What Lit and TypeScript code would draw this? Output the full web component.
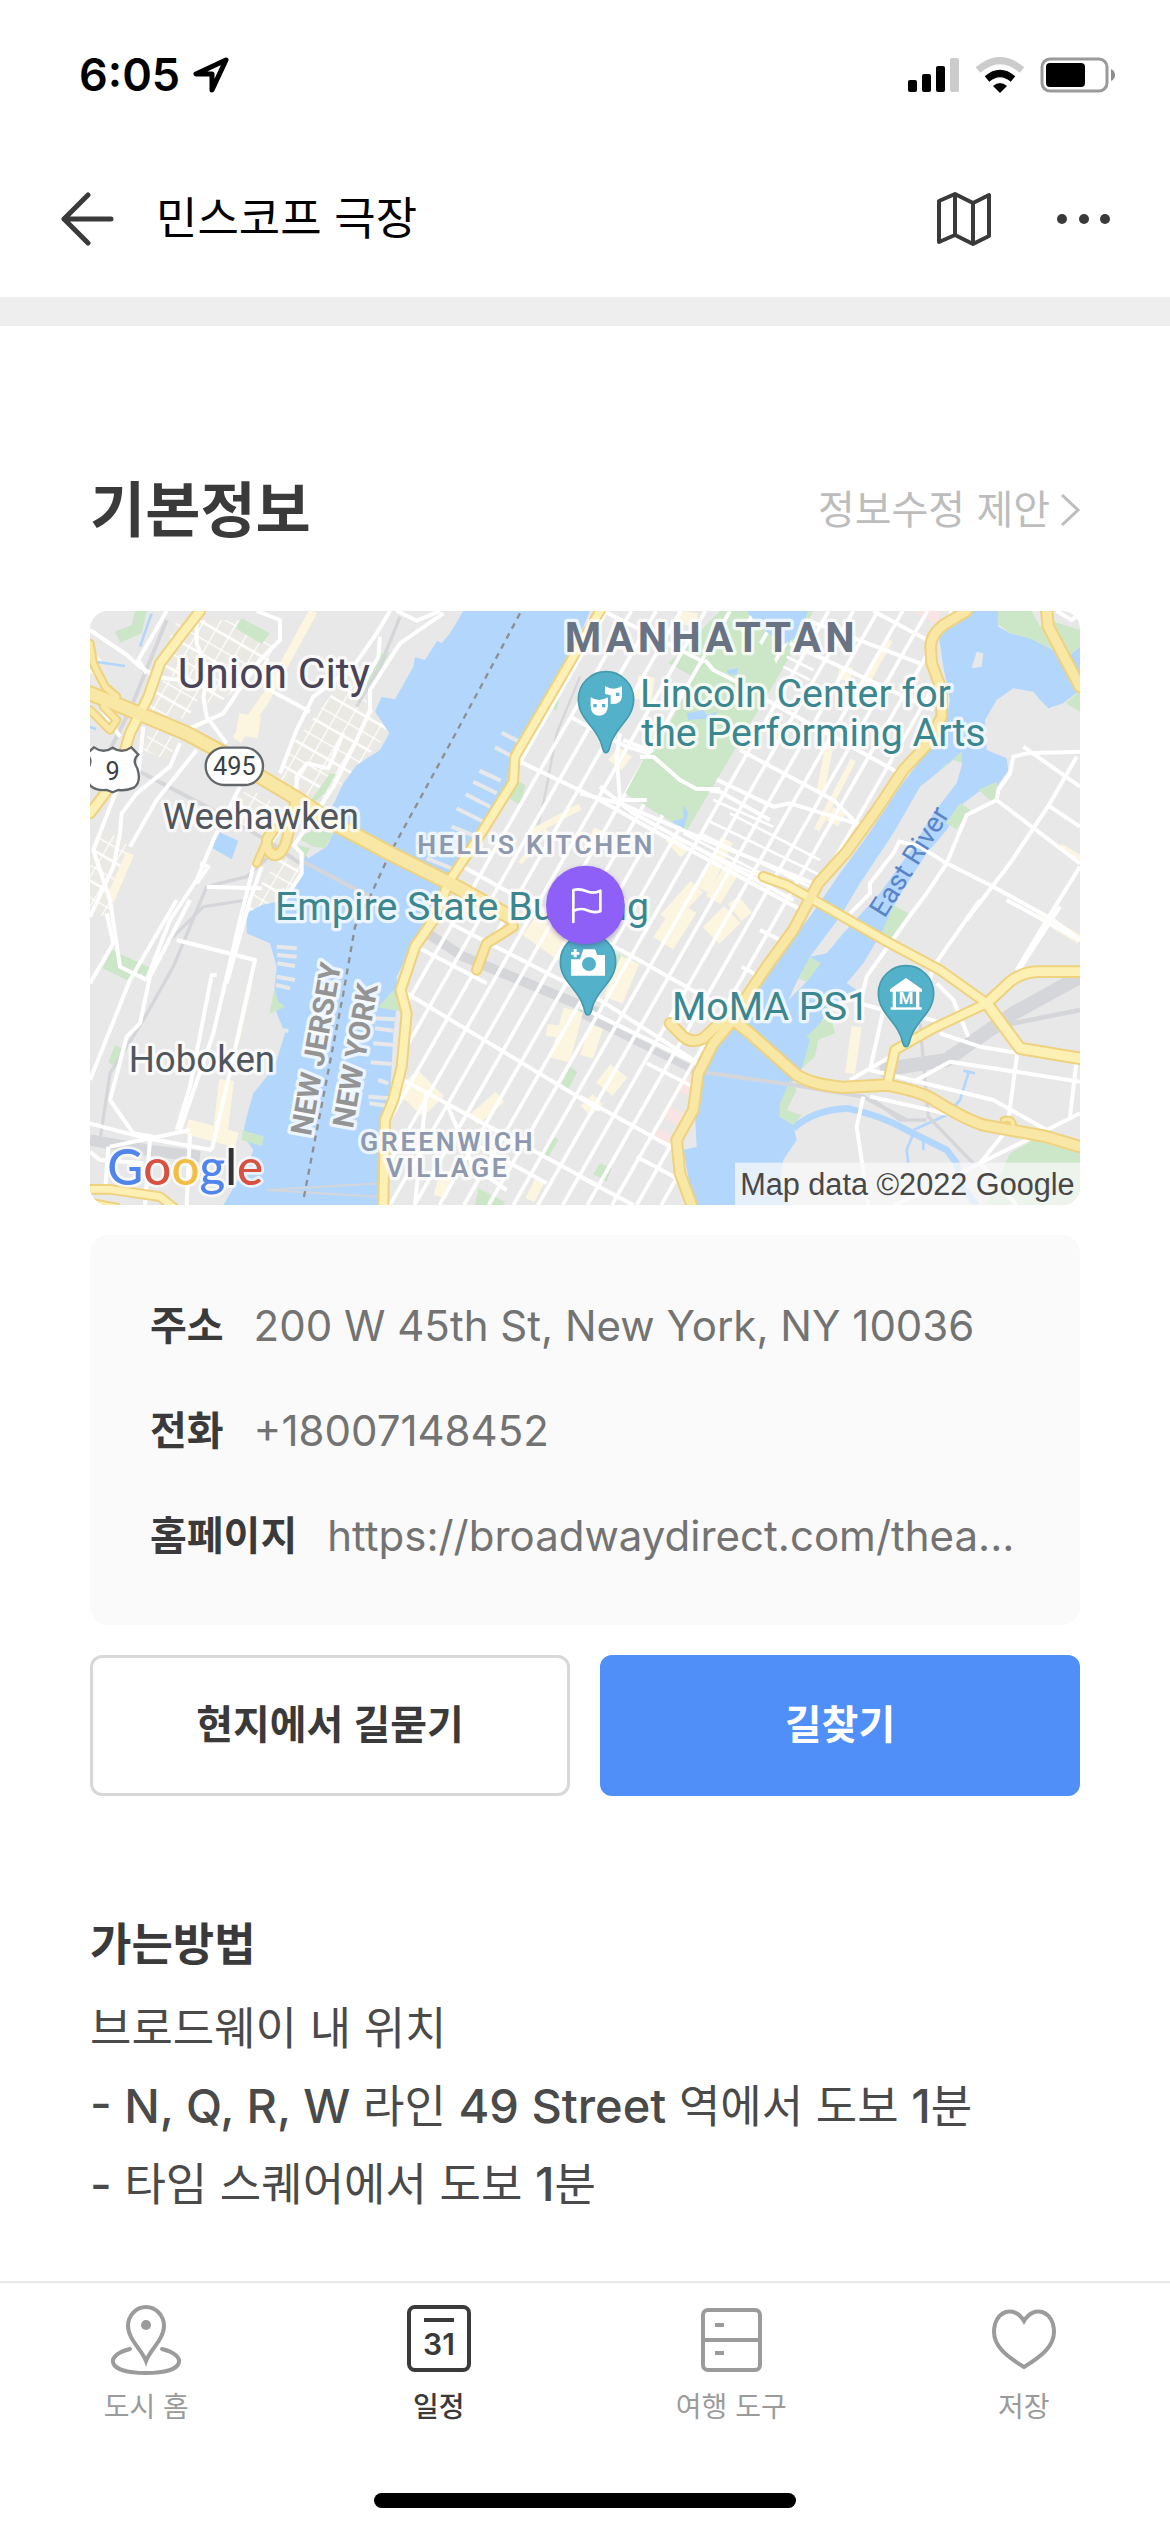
import { LitElement, html, css, svg } from "lit";
import { customElement } from "lit/decorators.js";
import { classMap } from "lit/directives/class-map.js";

/* Geometry of the map drawing; one map unit is a third of a pixel. */
const HUDSON =
  "M1150 33L1110 100 1085 130 1072 122 1035 180 1005 172 1000 200 945 298 905 290 885 335 928 400 900 450 830 495 790 550 762 610 740 640 760 700 740 740 685 775 660 745 665 815 630 870 590 905 545 915 500 940 500 1000 570 1030 590 1100 583 1170 590 1240 615 1300 590 1380 560 1430 520 1480 500 1550 488 1605 520 1650 505 1690 480 1730 430 1815H900L905 1600 930 1500 940 1300 955 1180 950 1130 990 1050 1050 970 1090 880 1190 700 1275 570 1295 480 1400 310 1480 170 1510 80 1530 33Z";
const EAST_RIVER =
  "M2640 33L2755 33 2755 80 2790 100 2850 115 2920 150 2970 165 3000 140 3000 270 2950 310 2905 325 2880 300 2860 275 2800 265 2750 300 2715 360 2720 450 2780 475 2785 510 2750 560 2700 572 2650 610 2600 690 2540 760 2450 900 2410 990 2350 1090 2300 1150 2330 1170 2240 1240 2190 1320 2200 1360 2140 1440 2100 1520 2100 1550 2140 1575 2150 1620 2110 1680 2100 1750 2130 1815H1840L1810 1650 1850 1640 1845 1540 1860 1440 1900 1350 1970 1270 2070 1100 2190 950 2280 820 2360 710 2460 560 2560 430 2600 350 2610 300 2590 200 2575 100Z";
const MANHATTAN =
  "M1560 33L1480 170 1300 470 1300 545 1110 840 1070 950 1010 1030 960 1170 980 1240 965 1400 940 1500 915 1560 910 1815H1835L1790 1620 1840 1530 1855 1420 1900 1330 1960 1260 2190 910 2300 755 2470 510 2585 350 2555 190 2550 110 2640 33Z";

const PARKS = [
  "M1920 33L1765 190 1840 230 1740 430 1690 480 1632 580 1820 692 2115 195 2200 33Z",
  "M105 95L155 75 165 33H200L185 100 120 128Z",
  "M485 55L570 100 545 132 467 85Z",
  "M890 165L930 155 880 250 860 262 858 235Z",
  "M750 520L768 522 735 580 700 608 695 598Z",
  "M655 715L700 690 760 700 735 745 700 740Z",
  "M655 735L690 745 672 778Z",
  "M95 1050L225 1110 205 1140 185 1120 140 1140 68 1105Z",
  "M105 1335L125 1345 105 1405 85 1385Z",
  "M583 1165L595 1205 615 1220 568 1242Z",
  "M488 1590L552 1610 545 1638 485 1620Z",
  "M940 1170L965 1235 895 1222Z",
  "M1305 540L1337 555 1320 615 1290 597Z",
  "M1450 240L1430 330 1415 325Z",
  "M1470 1400L1492 1415 1465 1468 1445 1450Z",
  "M1415 1605L1435 1620 1400 1680 1380 1660Z",
  "M1195 1765L1275 1805 1270 1815H1185Z",
  "M1560 1690L1595 1705 1580 1745 1540 1722Z",
  "M1610 1060L1632 1072 1618 1110 1600 1100Z",
  "M2755 33H2855L2880 80 2905 60 3000 90V140L2970 165 2920 150 2850 115 2790 100 2752 70Z",
  "M3000 270L2958 310 3000 335Z",
  "M2645 455V500L2600 490 2565 525Z",
  "M2750 545V590L2735 605 2695 570Z",
  "M2640 610L2672 630 2630 688 2598 670Z",
  "M2440 915L2485 940 2430 1030 2400 1010Z",
  "M2190 1070L2222 1090 2180 1145 2155 1135Z",
  "M2250 1240L2265 1300 2215 1320 2205 1370 2165 1405 2190 1320 2180 1310Z",
  "M2130 1440L2150 1470 2120 1530 2165 1545 2140 1575 2098 1550 2100 1510Z",
  "M2790 1660L2860 1620 3000 1660V1815H2720Z",
];

const BUILT_UP = [
  "M290 60L480 60 590 120 560 200 400 320 240 200Z",
  "M250 240L370 270 320 360 200 330Z",
  "M820 200L870 330 905 340 928 400 830 500 770 570 690 610 590 540 640 430Z",
  "M210 380L300 420 260 480 190 450Z",
  "M500 560L600 620 550 720 450 650Z",
  "M65 680L150 740 90 960 30 930V800Z",
  "M600 770L660 790 650 840 560 960 470 960Z",
  "M30 140L80 200 60 260 30 240Z",
];

/* Shopping streets: x1, y1, x2, y2, width. */
const SHOPPING = [
  [700, 33, 560, 290, 26], [560, 290, 470, 420, 30], [510, 345, 500, 410, 66],
  [150, 760, 90, 900, 26], [510, 1150, 470, 1330, 14], [440, 1440, 420, 1600, 44],
  [320, 1580, 470, 1620, 46], [1560, 690, 1530, 760, 40], [1770, 710, 1815, 760, 36],
  [1870, 870, 1940, 720, 40], [1900, 900, 1960, 800, 50], [1760, 960, 1850, 860, 50],
  [2250, 640, 2285, 660, 44], [2250, 430, 2220, 580, 24], [2320, 480, 2210, 690, 18],
  [1700, 230, 1690, 300, 50], [1790, 50, 1850, 60, 40], [2300, 200, 2290, 240, 40],
  [2430, 120, 2330, 300, 18], [1600, 460, 1640, 490, 50], [1750, 1030, 1820, 920, 70],
  [1900, 950, 1950, 1000, 90], [1960, 900, 2000, 950, 40], [1600, 1200, 1650, 1080, 60],
  [1570, 1420, 1620, 1460, 70], [1520, 1500, 1550, 1530, 50], [1360, 960, 1500, 1060, 110],
  [1480, 1230, 1440, 1380, 60], [1400, 1290, 1480, 1300, 36], [980, 1440, 1060, 1520, 90],
  [1180, 1560, 1260, 1490, 40], [1100, 1720, 1080, 1790, 40], [1380, 1740, 1350, 1800, 30],
  [1550, 1280, 1520, 1370, 40], [1350, 700, 1500, 620, 20], [1320, 790, 1400, 690, 14],
  [2330, 1280, 2310, 1420, 30], [2870, 940, 3000, 1020, 26], [2940, 740, 3000, 775, 20],
];

/* Cross-town streets of Manhattan. */
const STREETS = [
  "M1320 485L1560 600 1700 680 2220 960",
  "M1470 350L1640 440 1740 470 1840 565 1920 575 2070 660",
  "M1500 580L1620 610 1830 700 2200 850",
  "M1150 800L1310 890 1640 1060 1960 1240",
  "M1560 560L1660 640 2140 900",
  "M1630 420L1830 500 2080 620 2130 610 2360 680",
  "M1980 450L2260 600 2340 680",
  "M2060 300L2450 515", "M2130 130L2560 330", "M2180 60L2520 190", "M1570 33L1900 200",
  "M2380 33L2560 130", "M1110 970L1560 1200 1840 1380", "M1010 1040L1220 1150",
  "M980 1180L1560 1530", "M1500 1220L1850 1390", "M970 1440L1560 1760",
  "M1500 1490L1790 1650", "M1670 1670L1800 1740", "M1500 1730L1660 1815",
  "M1700 1390L1840 1460", "M2040 990L2100 1020", "M1985 1100L2040 1130",
  "M1200 1640L1400 1750", "M1040 1470L1005 1815", "M1100 1510L1180 1700 1280 1770",
];

const MINOR_STREETS = [
  "M1880 660L2230 830", "M1860 700L2210 870", "M1840 740L2200 900", "M1950 640L2220 780",
  "M1900 600L2080 680", "M2120 170L2200 210", "M2110 200L2190 240", "M1810 700L2100 850",
];

const WHITE_ROADS = [
  "M30 90L140 165 180 200 230 232 300 240", "M260 33L175 180 200 220", "M350 50V130L385 220 370 290 380 350 440 430",
  "M530 33L600 60V120L540 180 470 280 430 340 330 385", "M930 33L890 100 820 200 700 290 650 390 600 520",
  "M1090 40L960 130 870 270V330L830 420 760 560 640 740", "M950 33L1010 62 1080 33", "M900 110L895 170 830 290",
  "M570 270L690 335", "M60 320L120 410", "M300 430L270 500 170 580 125 640 120 700 100 800 30 950",
  "M350 450L230 600 150 740", "M110 570L40 750 90 900 120 1100 200 1140", "M480 560L400 720 350 840 270 960 200 1140",
  "M600 690L520 800 480 960 400 1300 300 1590", "M545 800L510 900 440 1150", "M640 735L665 760V820L600 920",
  "M380 860L545 865", "M360 790L385 800 350 850", "M650 590V530L680 490 745 505 790 400",
  "M330 900L210 1130 180 1270 140 1310 90 1500 160 1600 220 1610", "M290 900L150 1140 30 1440",
  "M290 1020L525 1080 440 1460 395 1650", "M80 940L100 1030 30 1150", "M410 1125H395L330 1460 290 1590",
  "M30 1570L200 1615 395 1650", "M90 1640L330 1590", "M85 1640L75 1780", "M210 1620L195 1815", "M330 1600L320 1815",
  "M30 1655L60 1680 190 1690", "M190 380L175 520 150 560",
  "M3000 455L2840 460 2800 470 2790 520 2755 570 2750 600 2660 645 2600 790 2540 880 2480 960 2360 1130 2340 1210 2410 1230 2370 1410",
  "M2750 600L3000 790", "M2830 440L3000 560", "M2990 470L2910 610 2790 790 2660 960", "M2910 620L3000 680",
  "M2460 725L2520 740 2600 790 2740 860 2920 960 3000 1020", "M3000 800L2900 960 2810 1110",
  "M2700 900L2560 1100 2540 1180", "M2940 920L2810 1120", "M2780 900L3000 1020", "M2570 1150L2620 1200 2665 1310",
  "M2520 1250L2590 1270", "M2580 1300L2700 1340 2820 1360", "M2812 1360L2785 1560", "M2990 1380L2970 1550",
  "M2310 1440L2450 1360", "M2370 1410L2740 1500 2900 1590", "M2500 1445L2610 1385 3000 1445", "M2350 1490L2330 1580 2365 1815",
  "M2370 1490L2640 1550", "M3000 1540L2900 1590 2700 1690 2520 1780 2440 1815", "M2780 1590L2700 1690 2810 1815",
  "M2460 720L2440 760 2370 850V880L2310 940", "M2930 33L2975 60 3000 40",
];

const RAILS: Array<[string, number]> = [
  ["M260 60L150 330 90 450", 12], ["M170 510L380 620 560 720 660 790", 12], ["M660 780L870 890", 12],
  ["M600 740L500 830 380 860 280 1100 190 1260 90 1420 60 1620", 10], ["M500 900L370 920 270 1020", 9],
  ["M30 1620L200 1650 360 1670", 34], ["M1020 985L1150 1070 1560 1240", 30], ["M1500 1240L1840 1410", 22],
  ["M1880 1418L2140 1455 2350 1490 2480 1560", 12], ["M2400 1410L2600 1380 2800 1240 3000 1130", 42],
  ["M2600 1360L2800 1270 3000 1230", 14], ["M2520 1270L2545 1550 2680 1690", 10], ["M2380 1500L2460 1560 2540 1560", 10],
  ["M1500 230L1430 400 1400 560 1370 700", 7], ["M560 1770L900 1750", 6], ["M560 1770L900 1790", 6],
  ["M960 50L900 200 830 320", 10],
];

/* Main roads: path, width, pale. */
const HIGHWAYS: Array<[string, number, boolean]> = [
  ["M360 33L300 110 240 190 205 290 150 400 120 500 75 580 30 640", 24, true],
  ["M30 130L40 190 75 260 110 290", 16, false],
  ["M30 330L90 390 110 360 70 320", 16, false],
  ["M1560 33L1480 170 1305 470 1300 545 1210 690 1110 840", 22, true],
  ["M1110 840L1060 960 1005 1040 962 1170 980 1240 965 1400 940 1500 915 1560 910 1815", 24, true],
  ["M650 590L625 700Q610 770 580 765 555 750 562 715L580 690", 24, false],
  ["M562 720L530 790", 16, false],
  ["M1290 940L1300 980 1220 1030 1190 1110", 22, false],
  ["M1770 1270L1800 1300Q1830 1335 1870 1315L1950 1240", 26, false],
  ["M30 1768L90 1768 240 1790 290 1830", 20, true],
  ["M30 1805L110 1820", 12, true],
  ["M2050 830L2120 855 2210 905 2430 1030 2580 1110 2720 1210", 22, true],
  ["M2720 1210L2790 1145Q2830 1114 2880 1115H3000", 26, true],
  ["M2720 1210L2560 1285 2445 1350 2425 1440", 22, true],
  ["M2720 1210L2820 1345 3000 1375", 28, true],
  ["M2900 33L2905 80 3000 260", 28, false],
  ["M2770 1560Q2800 1550 2800 1580", 10, false],
  ["M1960 1260L2010 1300 2150 1425Q2200 1455 2290 1462L2420 1455Q2530 1475 2570 1505 2660 1560 2710 1575L2900 1610 3000 1640", 28, false],
  ["M2660 33L2590 75Q2552 105 2552 140L2555 190 2585 270V350L2545 430 2470 510 2390 630 2300 755 2215 850 2140 990 2060 1100 2000 1190 1960 1260 1900 1330 1855 1420 1840 1530 1790 1620 1800 1720 1835 1815", 26, false],
  ["M30 280L200 350 320 400 450 470 540 530 650 595 770 675 930 760 1110 850 1290 950", 36, false],
];

const PIERS = [
  "M1265 398L1318 425", "M1245 442L1298 470", "M1198 512L1262 542", "M1180 545L1250 580", "M1157 583L1230 620",
  "M1130 625L1210 665", "M1115 680L1190 710", "M1040 775L1115 805", "M880 1255L945 1258", "M885 1285L940 1292",
  "M880 1330L940 1335", "M872 1387L935 1392", "M895 1440L925 1450", "M865 1490L930 1495", "M868 1510L925 1518",
  "M590 1040L650 1045", "M592 1065L650 1070", "M592 1090L645 1098", "M590 1130L645 1140", "M588 1155L630 1165",
  "M600 1290L625 1292",
];

const avenues = Array.from({ length: 34 }, (_, i) => {
  const x = 560 + i * 74;
  return `M${x} 1815L${x + 1020} 33`;
});

const pin = (x: number, y: number) => svg`
  <path class="pin" transform="translate(${x} ${y})"
    d="M0 160C-8 160-10 150-12 140-24 84-83 62-83 0A83 83 0 1 1 83 0C83 62 24 84 12 140 10 150 8 160 0 160Z" />`;

@customElement("area-map")
class AreaMap extends LitElement {
  static styles = css`
    :host { display: block; }
    .map { display: block; width: 100%; height: auto; border-radius: 18px; }
    .land { fill: #e8e8e8; }
    .water { fill: #b3d7fc; }
    .creek { fill: none; stroke: #b3d7fc; stroke-width: 20; stroke-linejoin: round; }
    .thin { stroke-width: 8; }
    .built { fill: #ebe9e4; }
    .park { fill: #cce7c8; }
    .shopping { stroke: #fcf5df; }
    .road { fill: none; stroke: #fff; stroke-width: 12; stroke-linejoin: round; }
    .avenue { fill: none; stroke: #fff; stroke-width: 11; }
    .minor { fill: none; stroke: #fff; stroke-width: 8; }
    .rail { fill: none; stroke: #d5d6da; }
    .pier { fill: none; stroke: #e8e8e8; stroke-width: 12; }
    .case { fill: none; stroke: #efd27d; stroke-linejoin: round; stroke-linecap: round; }
    .main { fill: none; stroke: #f9e7a5; stroke-linejoin: round; stroke-linecap: round; }
    .pale { stroke: #fdf0b4; }
    .border { fill: none; stroke: #8f8f8f; stroke-width: 7; stroke-dasharray: 18 16; }
    .label { font-family: Roboto, "Liberation Sans", sans-serif; font-size: 110px; fill: #4f565e;
      stroke: rgba(255, 255, 255, 0.75); stroke-width: 20px; stroke-linejoin: round; paint-order: stroke; }
    .city { font-size: 128px; fill: #4a4459; }
    .place { font-size: 118px; fill: #3b8790; }
    .borough { font-size: 125px; font-weight: 700; letter-spacing: 0.1em; fill: #687384; }
    .district { font-size: 80px; font-weight: 600; letter-spacing: 0.1em; fill: #8e99b0; }
    .state { font-size: 88px; font-weight: 700; fill: #949494; text-anchor: middle; }
    .river { font-size: 84px; fill: #5b84c8; stroke: none; text-anchor: middle; }
    .shield { fill: #fff; stroke: #62676b; stroke-width: 7; }
    .number { font-size: 76px; fill: #3c4043; stroke: none; text-anchor: middle; }
    .pin { fill: #53b1c9; stroke: #459bad; stroke-width: 5; }
    .glyph { fill: #fff; }
    .hole { fill: #53b1c9; }
    .museum { font-size: 50px; font-weight: 700; fill: #fff; stroke: none; text-anchor: middle; }
    .spot { fill: #8f60f8; filter: drop-shadow(0 6px 8px rgba(60, 30, 120, 0.35)); }
    .flag { fill: none; stroke: #fff; stroke-width: 8; stroke-linecap: round; stroke-linejoin: round; }
    .brand { font-family: Lato, "Open Sans", sans-serif; font-size: 148px; font-weight: 500;
      stroke: rgba(255, 255, 255, 0.7); stroke-width: 16px; stroke-linejoin: round; paint-order: stroke; }
    .blue { fill: #5086ec; }
    .red { fill: #d85140; }
    .gold { fill: #f1be42; }
    .dark { fill: #333; }
    .credit-box { fill: rgba(250, 250, 250, 0.72); }
    .credit { font-family: "Liberation Sans", Arial, sans-serif; font-size: 92px; fill: #484848; text-anchor: end; }
  `;

  render() {
    return html`
      <svg class="map" viewBox="30 33 2970 1782" role="img" aria-label="Google">
        <defs>
          <clipPath id="island"><path d=${MANHATTAN} /></clipPath>
          <pattern id="blocks" width="44" height="84" patternUnits="userSpaceOnUse" patternTransform="rotate(30)">
            <path d="M0 0H44M0 0V84M0 42H44" fill="none" stroke="#fff" stroke-width="7" />
          </pattern>
        </defs>
        <rect class="land" x="30" y="33" width="2970" height="1782" />
        ${BUILT_UP.map((d) => svg`<path class="built" d=${d} /><path fill="url(#blocks)" d=${d} />`)}
        <path class="water" d=${HUDSON} />
        <path class="water" d=${EAST_RIVER} />
        <path class="water" d="M415 695L475 722 455 778 398 745Z" />
        <path class="creek thin" d="M215 40L180 140M45 185L135 198M30 380L48 388" />
        <path class="creek" d="M2140 1585Q2200 1530 2300 1525 2400 1545 2480 1590L2600 1650 2630 1690 2645 1760 2690 1815" />
        <path class="creek thin" d="M2500 1590L2600 1545 2640 1500 2665 1420M2650 1412L2685 1420M2500 1600L2480 1650 2485 1690M2530 1610V1650" />
        ${PARKS.map((d) => svg`<path class="park" d=${d} />`)}
        <path class="land" d="M2620 480L2647 490 2630 550 2560 640 2500 740 2400 880 2290 1000 2240 1060 2190 1070 2280 950 2340 850 2440 700 2520 560ZM2155 1135L2180 1145 2125 1200ZM2690 155L2710 160 2705 200 2675 205Z" />
        ${RAILS.map(([d, w]) => svg`<path class="rail" d=${d} stroke-width=${w} />`)}
        <path fill="#f8e4e2" d="M2500 33L2585 33 2570 75ZM1820 1418L1845 1440 1830 1490 1790 1470ZM1760 1515L1820 1545 1805 1585 1745 1550ZM1730 1582L1775 1605 1765 1635 1715 1610Z" />
        ${SHOPPING.map(([a, b, c, d, w]) => svg`<line class="shopping" x1=${a} y1=${b} x2=${c} y2=${d} stroke-width=${w} />`)}
        ${PIERS.map((d) => svg`<path class="pier" d=${d} />`)}
        <g clip-path="url(#island)">
          ${avenues.map((d) => svg`<path class="avenue" d=${d} />`)}
          ${STREETS.map((d) => svg`<path class="road" d=${d} />`)}
          ${MINOR_STREETS.map((d) => svg`<path class="minor" d=${d} />`)}
          <path class="park" d="M1920 60L1870 190 1850 260 1755 430 1690 478 1636 580 1818 688 1915 530 2095 210 2080 170 2030 120Z" />
          <path class="water" d="M2000 33L2040 80 2110 135 2150 110 2185 33ZM1820 340L1870 330 1880 345 1910 335 1905 355 1825 360ZM1940 210L1975 205 1970 225 1945 222ZM1775 665L1810 655V615L1825 640 1812 685Z" />
          <path class="road" d="M1680 470H1720L1800 540 1850 567H1920M1875 180L1900 210 1970 245" />
          <path class="road" d="M1620 400L1610 470 1620 600 1700 600" />
        </g>
        ${WHITE_ROADS.map((d) => svg`<path class="road" d=${d} />`)}
        <path class="border" d="M1320 40L1240 190 1100 450 930 760 870 890 825 980 790 1180 670 1800" />
        ${HIGHWAYS.map(([d, w]) => svg`<path class="case" d=${d} stroke-width=${w + 12} />`)}
        ${HIGHWAYS.map(([d, w, pale]) => svg`<path class=${pale ? "main pale" : "main"} d=${d} stroke-width=${w} />`)}

        <path class="shield" d="M20 462L42 442Q70 462 98 443 126 462 154 442L175 464Q155 480 172 505 185 545 162 563 140 573 115 570L98 577 80 570Q50 573 32 558 16 540 24 505 40 480 20 462Z" />
        <text class="label number" x="98" y="540">9</text>
        <rect class="shield" x="377" y="443" width="172" height="112" rx="56" />
        <text class="label number" x="463" y="526">495</text>

        <text class="label city" x="293" y="264">Union City</text>
        <text class="label" x="248" y="686">Weehawken</text>
        <text class="label" x="146" y="1415">Hoboken</text>
        <text class="label borough" x="1454" y="157">MANHATTAN</text>
        <text class="label district" x="1012" y="762">HELL'S KITCHEN</text>
        <text class="label district" x="840" y="1652">GREENWICH</text>
        <text class="label district" x="918" y="1732">VILLAGE</text>
        <text class="label state" transform="translate(738 1352) rotate(-80)">NEW JERSEY</text>
        <text class="label state" transform="translate(856 1372) rotate(-80)">NEW YORK</text>
        <text class="label river" transform="translate(2512 800) rotate(-58)">East River</text>
        <text class="label place" x="1680" y="320">Lincoln Center for</text>
        <text class="label place" x="1684" y="437">the Performing Arts</text>
        <text class="label place" x="585" y="961">Empire State Building</text>
        <text class="label place" x="1776" y="1261">MoMA PS1</text>

        ${pin(1578, 298)} ${pin(1524, 1085)} ${pin(2478, 1180)}
        <path class="glyph" d="M1575 258Q1600 274 1626 258V288Q1624 312 1600 312H1592V286L1575 282Z" />
        <path class="glyph" d="M1532 292Q1557 308 1584 292V318Q1582 347 1557 347 1533 347 1532 318Z" />
        <path class="hole" d="M1540 312H1550V322H1540ZM1566 312H1576V322H1566ZM1608 278H1618V288H1608Z" />
        <path class="glyph" d="M1473 1078H1500L1510 1048H1545L1552 1065H1575V1127H1473ZM1481 1047H1490V1056H1498V1064H1490V1072H1481V1064H1473V1056H1481Z" />
        <circle class="hole" cx="1527" cy="1092" r="21" />
        <path class="glyph" d="M2430 1168L2478 1134 2526 1168V1175H2518V1222H2525V1229H2432V1222H2438V1175H2430Z" />
        <path class="hole" d="M2448 1175H2508V1222H2448Z" />
        <text class="label museum" x="2478" y="1213">M</text>

        <circle class="spot" cx="1516" cy="915" r="118" />
        <path class="flag" d="M1480 966V870Q1500 865 1520 874T1561 872V934Q1541 940 1521 931T1480 933" />

        <text class="brand" x="82" y="1755"><tspan class="blue">G</tspan><tspan class="red">o</tspan><tspan class="gold">o</tspan><tspan class="blue">g</tspan><tspan class="dark">l</tspan><tspan class="red">e</tspan></text>
        <rect class="credit-box" x="1965" y="1688" width="1035" height="127" />
        <text class="credit" x="2984" y="1785">Map data ©2022 Google</text>
      </svg>
    `;
  }
}

const cityIcon = svg`
  <path d="M36 56C32 45 18 34 18 21A18 19 0 0 1 54 21C54 34 40 45 36 56Z" />
  <path d="M20 44C-5 50-5 68 36 68S77 50 52 44" stroke-linecap="round" />
  <circle class="solid" cx="36" cy="20" r="5" />`;
const planIcon = svg`
  <rect x="6" y="2" width="60" height="63" rx="6" />
  <path d="M21 15H51" />
  <text class="date" x="36" y="50">31</text>`;
const toolsIcon = svg`
  <rect x="8" y="5" width="57" height="60" rx="5" />
  <path d="M8 35H65M20 20H29M20 48H29" />`;
const heartIcon = svg`
  <path d="M36 16C46-1 66 6 66 27 66 41 54 51 36 62 18 51 6 41 6 27 6 6 26-1 36 16Z" />`;

const tabs = [
  { label: "도시 홈", icon: cityIcon, current: false },
  { label: "일정", icon: planIcon, current: true },
  { label: "여행 도구", icon: toolsIcon, current: false },
  { label: "저장", icon: heartIcon, current: false },
];

const contacts = [
  { term: "주소", value: html`200 W 45th St, New York, NY 10036` },
  { term: "전화", value: html`<a class="plain" href="tel:+18007148452">+18007148452</a>` },
  { term: "홈페이지", value: html`<a class="plain" href="https://broadwaydirect.com/">https://broadwaydirect.com/thea...</a>` },
];

@customElement("app-root")
class AppRoot extends LitElement {
  static styles = css`
    :host {
      display: flex;
      flex-direction: column;
      min-height: 100vh;
      background: #fff;
      color: #3a3a3a;
      font-family: Inter, "Noto Sans CJK KR", sans-serif;
    }
    * { box-sizing: border-box; }
    svg { display: block; flex: none; }
    .status { display: flex; align-items: center; height: 141px; padding: 8px 54px 0 79px; color: #000; }
    .clock { font-size: 45px; line-height: 60px; font-weight: 600; }
    .locate { margin-left: 12px; }
    .signals { display: flex; align-items: center; gap: 16px; margin-left: auto; }
    .bar { display: flex; align-items: center; height: 156px; padding: 0 60px; }
    .icon-button { display: flex; padding: 0; border: 0; background: none; color: inherit; }
    .place-name { flex: 1; margin: 0 0 0 42px; color: #000; font-size: 45px; line-height: 60px; font-weight: 400; }
    .tools { display: flex; align-items: center; gap: 62px; }
    .band { height: 29px; background: #eee; }
    .content { padding: 139px 90px 56px; }
    .head { display: flex; align-items: center; justify-content: space-between; height: 90px; margin-bottom: 56px; }
    .title { margin: 0; font-size: 60px; line-height: 90px; font-weight: 600; }
    .suggest { display: flex; align-items: center; gap: 10px; color: #bdbdbd; font-size: 40px; line-height: 60px; text-decoration: none; }
    .card { margin: 30px 0; padding: 38px 60px 37px; border-radius: 18px; background: #fafafa; font-size: 40px; line-height: 105px; }
    .row { display: flex; gap: 30px; }
    .term { flex: none; font-weight: 600; }
    .value { min-width: 0; margin: 0; overflow: hidden; color: #737373; font-size: 42px; text-overflow: ellipsis; white-space: nowrap; }
    .plain { color: inherit; text-decoration: none; }
    .actions { display: grid; grid-template-columns: 1fr 1fr; gap: 30px; }
    .action { height: 141px; padding: 0 0 8px; border: 3px solid #d8d8d8; border-radius: 12px; background: #fff; color: #3a3a3a; font: inherit; font-size: 40px; font-weight: 600; }
    .primary { border-color: #4f8ff7; background: #4f8ff7; color: #fff; }
    .subtitle { margin: 110px 0 6px; font-size: 45px; line-height: 78px; font-weight: 600; }
    .line { margin: 0; color: #4a4a4a; font-size: 45px; line-height: 78px; }
    .latin { font-size: 47px; font-weight: 500; line-height: 60px; }
    .foot { margin-top: auto; border-top: 2px solid #e7e7e7; padding-bottom: 24px; }
    .tabs { display: grid; grid-template-columns: repeat(4, 1fr); padding-top: 22px; }
    .tab { display: flex; flex-direction: column; align-items: center; gap: 10px; color: #9b9b9b; font-size: 28px; line-height: 40px; text-decoration: none; }
    .current { color: #3a3a3a; font-weight: 500; }
    .tab-icon { overflow: visible; fill: none; stroke: currentColor; stroke-width: 4; }
    .solid { fill: currentColor; stroke: none; }
    .date { fill: currentColor; stroke: none; font-size: 30px; font-weight: 600; text-anchor: middle; }
    .home-bar { width: 36%; height: 15px; margin: 66px auto 0; border-radius: 8px; background: #000; }
  `;

  render() {
    return html`
      <div class="status">
        <span class="clock">6:05</span>
        <svg class="locate" width="38" height="38" viewBox="0 0 38 38" fill="none" stroke="currentColor" stroke-width="5" stroke-linejoin="round">
          <path d="M34 4L4 18H20V34Z" />
        </svg>
        <div class="signals">
          <svg width="52" height="36" viewBox="0 0 52 36">
            <rect x="0" y="23" width="9" height="12" rx="2" /><rect x="14" y="17" width="9" height="18" rx="2" />
            <rect x="28" y="9" width="9" height="26" rx="2" /><rect x="42" y="1" width="9" height="34" rx="2" fill="#ccc" />
          </svg>
          <svg width="48" height="36" viewBox="0 0 48 36" fill="none" stroke="#000" stroke-width="7">
            <path d="M2 13Q24-6 46 13" stroke="#ccc" /><path d="M11 22Q24 11 37 22" />
            <path d="M24 36L17 29Q24 23 31 29Z" fill="#000" stroke="none" />
          </svg>
          <svg width="76" height="36" viewBox="0 0 76 36">
            <rect x="2" y="2" width="65" height="32" rx="8" fill="none" stroke="#9a9a9a" stroke-width="3" />
            <rect x="6" y="6" width="39" height="24" rx="4" /><path d="M71 12Q75 14 75 18T71 24Z" fill="#8c8c8c" />
          </svg>
        </div>
      </div>
      <header class="bar">
        <button class="icon-button" aria-label="back">
          <svg width="54" height="54" viewBox="0 0 54 54" fill="none" stroke="currentColor" stroke-width="5" stroke-linecap="round" stroke-linejoin="round">
            <path d="M28 3L4 27 28 51M4 27H51" />
          </svg>
        </button>
        <h1 class="place-name">민스코프 극장</h1>
        <div class="tools">
          <button class="icon-button" aria-label="map">
            <svg width="56" height="54" viewBox="0 0 56 54" fill="none" stroke="currentColor" stroke-width="4" stroke-linejoin="round">
              <path d="M3 9L19 2 37 11 53 3V44L37 52 19 43 3 50ZM19 2V43M37 11V52" />
            </svg>
          </button>
          <button class="icon-button" aria-label="more">
            <svg width="56" height="54" viewBox="0 0 56 54" fill="currentColor">
              <circle cx="8" cy="27" r="5" /><circle cx="30" cy="27" r="5" /><circle cx="51" cy="27" r="5" />
            </svg>
          </button>
        </div>
      </header>
      <div class="band"></div>
      <main class="content">
        <div class="head">
          <h2 class="title">기본정보</h2>
          <a class="suggest" href="#suggest">정보수정 제안
            <svg width="20" height="34" viewBox="0 0 20 34" fill="none" stroke="currentColor" stroke-width="3"><path d="M2 2L18 17 2 32" /></svg>
          </a>
        </div>
        <area-map></area-map>
        <dl class="card">
          ${contacts.map((c) => html`<div class="row"><dt class="term">${c.term}</dt><dd class="value">${c.value}</dd></div>`)}
        </dl>
        <div class="actions">
          <button class="action">현지에서 길묻기</button>
          <button class="action primary">길찾기</button>
        </div>
        <h3 class="subtitle">가는방법</h3>
        <p class="line">브로드웨이 내 위치</p>
        <p class="line"><span class="latin">- N, Q, R, W</span> 라인 <span class="latin">49 Street</span> 역에서 도보 <span class="latin">1</span>분</p>
        <p class="line"><span class="latin">-</span> 타임 스퀘어에서 도보 <span class="latin">1</span>분</p>
      </main>
      <footer class="foot">
        <nav class="tabs">
          ${tabs.map((t) => html`
            <a class=${classMap({ tab: true, current: t.current })} href="#">
              <svg class="tab-icon" width="72" height="72" viewBox="0 0 72 72">${t.icon}</svg>
              <span>${t.label}</span>
            </a>`)}
        </nav>
        <div class="home-bar"></div>
      </footer>
    `;
  }
}
